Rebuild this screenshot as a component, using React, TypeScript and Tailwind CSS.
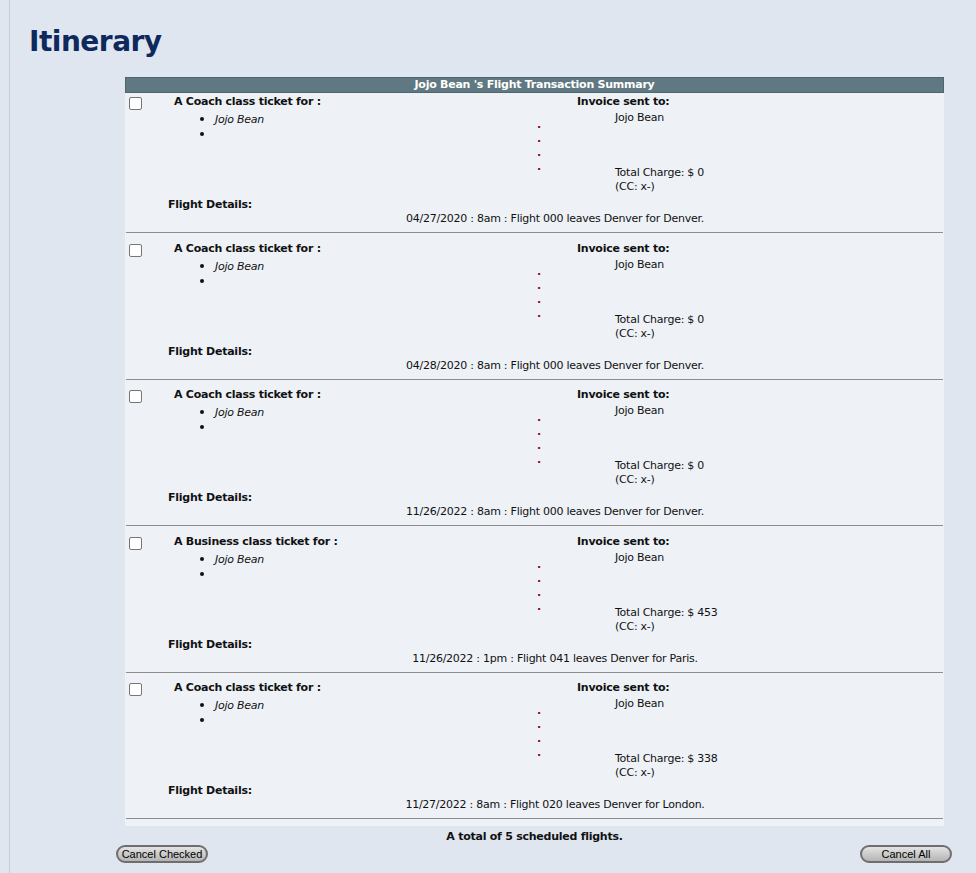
import React from "react";

interface Trip {
  cls: string;
  detail: string;
  charge: string;
}

const trips: Trip[] = [
  { cls: "Coach", detail: "04/27/2020 : 8am : Flight 000 leaves Denver for Denver.", charge: "0" },
  { cls: "Coach", detail: "04/28/2020 : 8am : Flight 000 leaves Denver for Denver.", charge: "0" },
  { cls: "Coach", detail: "11/26/2022 : 8am : Flight 000 leaves Denver for Denver.", charge: "0" },
  { cls: "Business", detail: "11/26/2022 : 1pm : Flight 041 leaves Denver for Paris.", charge: "453" },
  { cls: "Coach", detail: "11/27/2022 : 8am : Flight 020 leaves Denver for London.", charge: "338" },
];

const TripRow = ({ trip }: { trip: Trip }) => {
  return (
    <div>
      <div className="flex h-[133px] flex-col pt-[1px]">
        <div className="flex">
          {/* checkbox */}
          <div className="w-[41px] shrink-0 pl-[4px] pt-[3px]">
            <span className="block h-[13px] w-[13px] rounded-[2px] border border-[#767676] bg-white"></span>
          </div>
          {/* ticket */}
          <div className="w-[365px] shrink-0 pt-[1px]">
            <div className="pl-[8px] font-bold">A {trip.cls} class ticket for :</div>
            <ul className="mt-[3px] list-disc pl-[49px] marker:text-[13px]">
              <li className="italic">Jojo Bean</li>
              <li>&nbsp;</li>
            </ul>
          </div>
          {/* dots */}
          <div className="w-[46px] shrink-0 pl-[6px] pt-[24px] font-bold text-[#8e0c14]">
            <div>.</div>
            <div>.</div>
            <div>.</div>
            <div>.</div>
          </div>
          {/* invoice */}
          <div className="flex-1 pt-[1px]">
            <div className="font-bold">Invoice sent to:</div>
            <div className="mt-[2px] pl-[38px]">
              <div>Jojo Bean</div>
              <div className="h-[41px]"></div>
              <div>Total Charge: $ {trip.charge}</div>
              <div>(CC: x-)</div>
            </div>
          </div>
        </div>
        <div className="mt-auto pl-[41px]">
          <div className="pl-[2px] font-bold">Flight Details:</div>
          <div className="text-center">{trip.detail}</div>
        </div>
      </div>
      <div className="pb-[6.5px] pt-[6px]">
        <div className="mx-[1px] h-px bg-[#8c8c8c]"></div>
      </div>
    </div>
  );
};

const App = () => {
  return (
    <div className="min-h-[873px] bg-[#e0e6f0] font-['Tahoma','DejaVu_Sans',sans-serif] text-[11px] leading-[14px] tracking-[-0.25px] text-[#111]">
      <div className="ml-[9px] min-h-[873px] border-l border-[#c6ccd6] pt-[24px]">
        <h1 className="pl-[19px] text-[28px] leading-[36px] font-bold tracking-[-0.5px] text-[#0e2a5c]">Itinerary</h1>

        <div className="ml-[115px] mt-[17px] w-[819px]">
          <div className="border border-[#4d676f] bg-[#5f7881] text-center font-bold leading-[14px] text-white">
            Jojo Bean 's Flight Transaction Summary
          </div>
          <div className="bg-[#eef2f7]">
            {trips.map((trip, idx) => (
              <TripRow key={idx} trip={trip} />
            ))}
          </div>
        </div>

        <div className="ml-[115px] mt-[4px] w-[819px] text-center font-bold">A total of 5 scheduled flights.</div>

        <div className="ml-[106px] mt-[1px] flex w-[836px] justify-between">
          <button className="h-[18px] w-[92px] rounded-full border-2 border-[#6e6e6e] bg-gradient-to-b from-[#e4e4e4] to-[#b4b4b4] font-['Liberation_Sans',sans-serif] text-[11px] leading-[14px] tracking-normal text-black">
            Cancel Checked
          </button>
          <button className="h-[18px] w-[92px] rounded-full border-2 border-[#6e6e6e] bg-gradient-to-b from-[#e4e4e4] to-[#b4b4b4] font-['Liberation_Sans',sans-serif] text-[11px] leading-[14px] tracking-normal text-black">
            Cancel All
          </button>
        </div>
      </div>
    </div>
  );
};

export default App;
